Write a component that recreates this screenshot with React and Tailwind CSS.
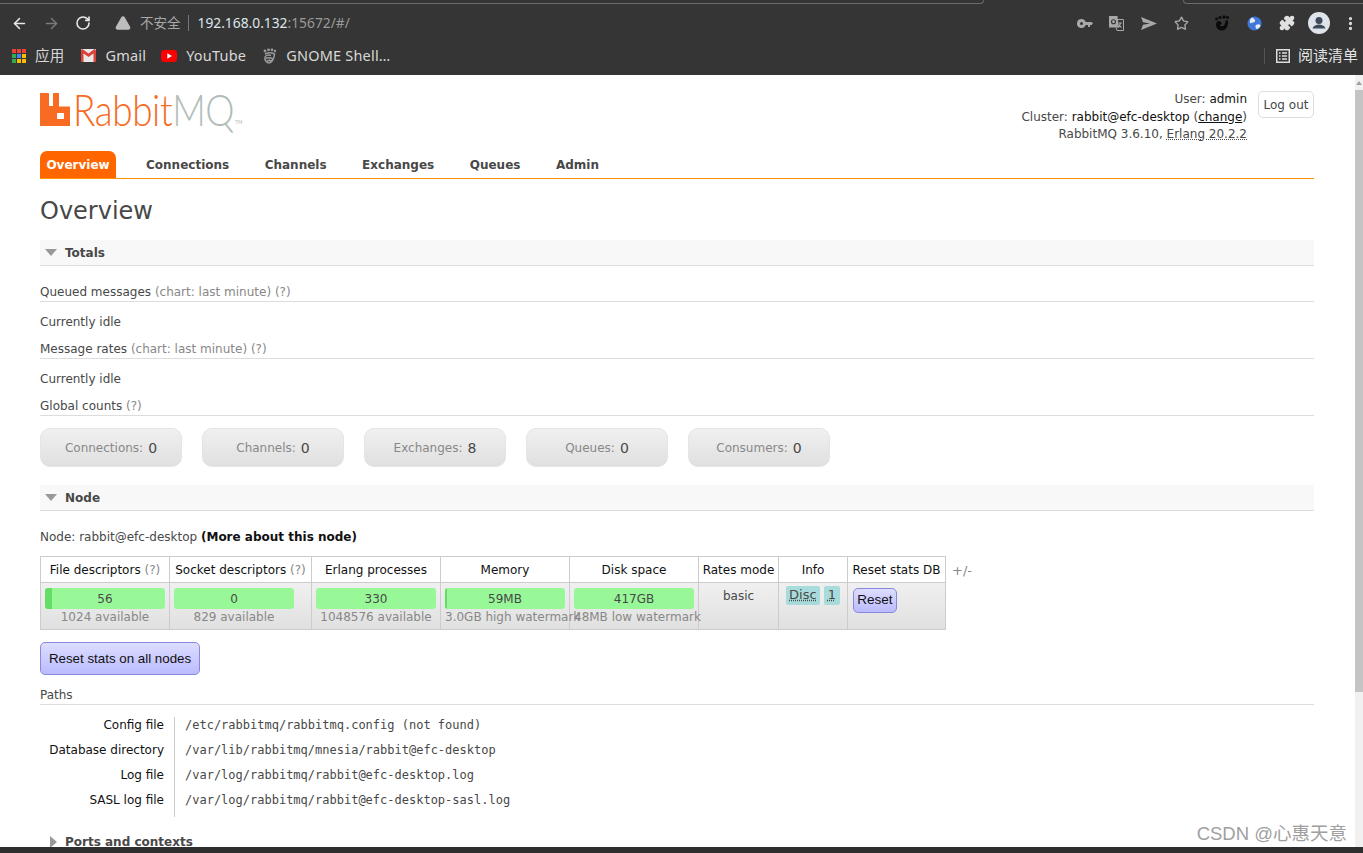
import React from 'react';
import { ArrowLeft, ArrowRight, RotateCw, TriangleAlert, Star, Puzzle, MoreVertical } from 'lucide-react';

const sans = { fontFamily: '"DejaVu Sans", Verdana, sans-serif' };
const lato = { fontFamily: 'Lato, sans-serif', fontWeight: 300 };
const arial = { fontFamily: '"Liberation Sans", sans-serif' };

const RabbitMark = () => (
  <svg width="30" height="33" viewBox="0 0 30 33" className="shrink-0">
    <path
      fillRule="evenodd"
      fill="#f76b23"
      d="M0 33V.6C0 .3.3 0 .6 0h7.800C8.700 0 9 .3 9 .6V13h4V.6c0-.3.3-.6.6-.6h4.800c.3 0 .6.3.6.6V13.500h11V33ZM17 20.500v5c0 .3.2.5.5.5h6c.3 0 .5-.2.5-.5v-5c0-.3-.2-.5-.5-.5h-6c-.3 0-.5.2-.5.5Z"
    />
  </svg>
);

const Bookmark = ({ icon, label, className }) => (
  <div className={`flex items-center gap-[9px] ${className}`}>
    {icon}
    <span>{label}</span>
  </div>
);

const AppsIcon = () => {
  const colors = ['#ea4335', '#ea4335', '#ea4335', '#34a853', '#4285f4', '#fbbc05', '#34a853', '#fbbc05', '#fbbc05'];
  return (
    <div className="grid grid-cols-3 gap-[1px] w-[14px] h-[14px]">
      {colors.map((c, i) => (
        <svg key={i} width="4" height="4" className="block">
          <rect width="4" height="4" fill={c} />
        </svg>
      ))}
    </div>
  );
};

const BrowserBar = () => (
  <div className="h-[75px] shrink-0 bg-[#353535] flex flex-col text-[#d8d8d8]" style={{ fontFamily: '"Noto Sans", "Noto Sans CJK SC", sans-serif' }}>
    <div className="h-[4px] shrink-0 flex justify-between">
      <div className="w-[984px] border-b border-r border-[#6a6a6a] rounded-br-[6px]"></div>
      <div className="w-[180px] border-b border-l border-[#6a6a6a] rounded-bl-[6px]"></div>
    </div>
    <div className="h-[38px] flex items-center pl-[11px] pr-[4px]">
      <ArrowLeft size={17} className="text-[#e8e8e8] mr-[15px]" strokeWidth={2.2} />
      <ArrowRight size={17} className="text-[#7a7a7a] mr-[15px]" strokeWidth={2.2} />
      <RotateCw size={16} className="text-[#e8e8e8] mr-[24px]" strokeWidth={2.4} />
      <TriangleAlert size={16} fill="#bdbdbd" className="text-[#bdbdbd] mr-[9px]" />
      <span className="text-[13.500px] text-[#a8a8a8]">不安全</span>
      <div className="w-px h-[16px] bg-[#777] ml-[7px] mr-[9px]"></div>
      <span className="text-[13.800px] text-[#dfe7ee]">192.168.0.132<span className="text-[#9a9a9a]">:15672/#/</span></span>
      <div className="ml-auto flex items-center">
        <svg width="16" height="9" viewBox="0 0 16 9" className="mr-[16px]">
          <path fill="#a8a8a8" fillRule="evenodd" d="M4.500 0a4.500 4.500 0 1 0 4.200 6H11v2h2V6h1.500L16 4.500 14.500 3H8.700A4.500 4.500 0 0 0 4.500 0Zm0 3a1.500 1.500 0 1 1 0 3 1.500 1.500 0 0 1 0-3Z" />
        </svg>
        <svg width="15" height="15" viewBox="0 0 15 15" className="mr-[17px]">
          <path fill="none" stroke="#a8a8a8" d="M6 3.500h8.500v11H8L7 11.500" />
          <path fill="#a8a8a8" d="M0 0h8.500l1 11.500H0Z" />
          <circle cx="4.500" cy="5.800" r="2" fill="none" stroke="#353535" strokeWidth="1.100" />
          <path stroke="#a8a8a8" strokeWidth="1.100" fill="none" d="M9 7h4M11.500 6.500c0 2-1.200 4-2.500 5M9.500 8.500c.8 1.200 1.800 2.200 3 3" />
        </svg>
        <svg width="16" height="13" viewBox="0 0 16 13" className="mr-[17px]">
          <path fill="#a8a8a8" d="M0 0 16 6.500 0 13l2-5.200 7-1.300-7-1.300Z" />
        </svg>
        <Star size={15} className="text-[#a8a8a8] mr-[25px]" strokeWidth={2.2} />
        <svg width="16" height="16" viewBox="0 0 16 16" className="mr-[17px]">
          <path fill="#0a0a0a" d="M8 15.500c-3.500 0-6-2.500-6-5.500C2 6.500 5 5 7 7c1.500 1.500 0 3.500-1.500 2.500 .5 2 3 2.500 4.500 1 1.500-1.500 1-4 2-5 1-1 2.500 0 2 2.500C13.500 12 11.500 15.500 8 15.500Z" />
          <circle cx="2.500" cy="4" r="1.400" fill="#0a0a0a" />
          <circle cx="6" cy="2.500" r="1.500" fill="#0a0a0a" />
          <circle cx="10" cy="2" r="1.700" fill="#0a0a0a" />
          <circle cx="13.500" cy="2.500" r="1.400" fill="#0a0a0a" />
        </svg>
        <svg width="15" height="15" viewBox="0 0 15 15" className="mr-[17px]">
          <circle cx="7.500" cy="7.500" r="7" fill="#3f78d8" />
          <path fill="#e8eef8" d="M5 1.500c2 1 3.500 2 3 4-1 1.500-3 .5-4.500 2C2.500 6 2.500 3 5 1.500ZM9 9c2-1 3.500-1 4.500.5-.5 2-2.500 3.500-4 3.500C8.500 11.500 8 10 9 9Z" />
        </svg>
        <Puzzle size={16} fill="#e0e0e0" className="text-[#e0e0e0] mr-[13px]" />
        <svg width="22" height="22" viewBox="0 0 22 22" className="mr-[12px]">
          <circle cx="11" cy="11" r="11" fill="#dfe3ea" />
          <circle cx="11" cy="8.500" r="3.500" fill="#3d4a5c" />
          <path fill="#3d4a5c" d="M4.500 16.500c1-3 4-4 6.500-4s5.500 1 6.500 4Z" />
        </svg>
        <MoreVertical size={17} className="text-[#e0e0e0]" strokeWidth={2.6} />
      </div>
    </div>
    <div className="flex items-center h-[27px] pl-[12px] pr-[5px] text-[14.500px] tracking-[0.2px]">
      <Bookmark className="mr-[17px]" icon={<AppsIcon />} label="应用" />
      <Bookmark className="mr-[15px]" label="Gmail" icon={
        <svg width="15" height="13" viewBox="0 0 15 13">
          <rect width="15" height="13" rx="1" fill="#e9e9e9" />
          <path d="M0 1.500V13h2.500V4.500L7.500 8 12.500 4.500V13H15V1.500L13.500 0 7.500 4.500 1.500 0Z" fill="#d9443a" />
        </svg>
      } />
      <Bookmark className="mr-[16px]" label="YouTube" icon={
        <svg width="16" height="12" viewBox="0 0 16 12">
          <rect width="16" height="12" rx="3" fill="#f00" />
          <path d="M6.300 3.300 11 6 6.300 8.700Z" fill="#fff" />
        </svg>
      } />
      <Bookmark label="GNOME Shell…" icon={
        <svg width="15" height="16" viewBox="0 0 15 16">
          <path fill="none" stroke="#9a9a9a" strokeWidth="1.500" d="M7.500 15C4 15 2.500 12 3 9c1-2 4-2.500 6-1.500M4 10.500c2-1 5-.5 7 .5M5 13c2-1 4-.5 5 0M3 6c3-1.500 7-1.500 9.500 0-.5 3-.5 7-5 9" />
          <circle cx="3" cy="3" r="1.400" fill="#9a9a9a" />
          <circle cx="6.500" cy="1.800" r="1.400" fill="#9a9a9a" />
          <circle cx="10" cy="1.800" r="1.400" fill="#9a9a9a" />
          <circle cx="13" cy="3" r="1.200" fill="#9a9a9a" />
        </svg>
      } />
      <div className="ml-auto flex items-center">
        <div className="w-px h-[16px] bg-[#555] mr-[11px]"></div>
        <svg width="14" height="14" viewBox="0 0 14 14" className="mr-[8px]">
          <rect x=".75" y=".75" width="12.500" height="12.500" fill="none" stroke="#ddd" strokeWidth="1.500" />
          <path stroke="#ddd" strokeWidth="1.300" d="M3 4h1.500M6 4h5M3 7h1.500M6 7h5M3 10h1.500M6 10h5" />
        </svg>
        <span className="text-[15px] tracking-normal text-[#e4e4e4]">阅读清单</span>
      </div>
    </div>
  </div>
);

const Section = ({ title, className = '' }) => (
  <div className={`h-[26px] bg-[#f8f8f8] border-b border-[#dddddd] flex items-center pl-[5px] font-bold text-[#484848] text-[12px] ${className}`}>
    <svg width="12" height="7" viewBox="0 0 12 7" className="mr-[8px]">
      <path d="M0 0h12L6 7Z" fill="#999" />
    </svg>
    {title}
  </div>
);

const SubHead = ({ title, hint }) => (
  <div className="h-[18px] pt-[1px] border-b border-[#dddddd] text-[12px] text-[#484848] leading-[14px] whitespace-nowrap">
    {title} {hint && <span className="text-[#888]">{hint}</span>} <span className="text-[#888]">(?)</span>
  </div>
);

const Stat = ({ label, value }) => (
  <div className="w-[142px] h-[39px] pt-[1px] rounded-[10px] bg-gradient-to-b from-[#f0f0f0] to-[#e0e0e0] border border-[#e4e4e4] flex items-center justify-center gap-[5px] text-[12px]">
    <span className="text-[#888]">{label}:</span>
    <span className="text-[#484848] text-[14px]">{value}</span>
  </div>
);

const Bar = ({ value, note, fill }) => (
  <div className="w-[120px] ml-[4px] text-center">
    <div className="relative h-[21px] rounded-[3px] bg-[#98f898] flex items-center justify-center text-[#484848] text-[12px] overflow-hidden">
      {fill && <div className={`absolute left-0 top-0 bottom-0 ${fill} bg-[#66dd66]`}></div>}
      <span className="relative">{value}</span>
    </div>
    <div className="text-[#888] text-[12px] leading-[14px] mt-[1px] whitespace-nowrap">{note}</div>
  </div>
);

const headCell = 'border border-[#cccccc] bg-white h-[26px] text-center font-normal text-[12px] text-[#111] p-0 whitespace-nowrap';
const bodyCell = 'border border-[#cccccc] align-top pt-[5px] px-0 pb-0 text-center';

const NodeTable = () => (
  <div className="flex items-start">
    <table className="border-collapse table-fixed w-[905px] h-[74px]">
      <colgroup>
        <col className="w-[129px]" />
        <col className="w-[142px]" />
        <col className="w-[129px]" />
        <col className="w-[129px]" />
        <col className="w-[129px]" />
        <col className="w-[80px]" />
        <col className="w-[69px]" />
        <col className="w-[98px]" />
      </colgroup>
      <thead>
        <tr>
          <th className={headCell}>File descriptors <span className="text-[#888]">(?)</span></th>
          <th className={headCell}>Socket descriptors <span className="text-[#888]">(?)</span></th>
          <th className={headCell}>Erlang processes</th>
          <th className={headCell}>Memory</th>
          <th className={headCell}>Disk space</th>
          <th className={headCell}>Rates mode</th>
          <th className={headCell}>Info</th>
          <th className={headCell}>Reset stats DB</th>
        </tr>
      </thead>
      <tbody>
        <tr className="bg-gradient-to-b from-[#f0f0f0] to-[#e0e0e0] h-[47px]">
          <td className={bodyCell}><Bar value="56" note="1024 available" fill="w-[7px]" /></td>
          <td className={bodyCell}><Bar value="0" note="829 available" /></td>
          <td className={bodyCell}><Bar value="330" note="1048576 available" /></td>
          <td className={bodyCell}><Bar value="59MB" note="3.0GB high watermark" fill="w-[2px]" /></td>
          <td className={bodyCell}><Bar value="417GB" note="48MB low watermark" /></td>
          <td className="border border-[#cccccc] align-top pt-[4px] px-0 pb-0 text-center text-[12px] text-[#484848]">basic</td>
          <td className="border border-[#cccccc] align-top pt-[3px] px-0 pb-0 text-center">
            <div className="flex justify-center gap-[4px]">
              <span className="bg-[#a8dcdc] rounded-[2px] h-[19px] px-[3px] text-[13px] leading-[18px] text-[#484848] underline decoration-dotted">Disc</span>
              <span className="bg-[#a8dcdc] rounded-[2px] h-[19px] px-[4px] text-[13px] leading-[18px] text-[#484848] underline decoration-dotted">1</span>
            </div>
          </td>
          <td className="border border-[#cccccc] align-top pt-[5px] pl-[5px] pr-0 pb-0">
            <button className="block h-[25px] w-[44px] rounded-[5px] border border-[#8888dd] bg-gradient-to-b from-[#ddddff] to-[#bbbbff] text-[13.500px] text-[#111]" style={arial}>Reset</button>
          </td>
        </tr>
      </tbody>
    </table>
    <span className="ml-[6px] mt-[5px] text-[13px] text-[#888]">+/-</span>
  </div>
);

const PathRow = ({ label, path }) => (
  <div className="flex h-[25px] items-start">
    <div className="w-[124px] pt-[1px] text-right text-[12px] leading-[15px] text-[#111] whitespace-nowrap">{label}</div>
    <div className="w-px h-[25px] bg-[#cccccc] ml-[10px]"></div>
    <div className="ml-[10px] pt-[1px] text-[12px] leading-[15px] text-[#484848] whitespace-nowrap" style={{ fontFamily: '"DejaVu Sans Mono", monospace' }}>{path}</div>
  </div>
);

const tabs = ['Connections', 'Channels', 'Exchanges', 'Queues', 'Admin'];

const Page = () => (
  <div className="flex-1 min-h-0 flex overflow-hidden bg-white" style={sans}>
    <div className="flex-1 min-w-0 pl-[40px] pr-[41px]">
      {/* header */}
      <div className="h-[76px] flex justify-between items-start pt-[16px]">
        <div className="flex items-start mt-[2px]">
          <RabbitMark />
          <div className="w-[159px] ml-[3px] h-[33px] overflow-visible">
            <div className="origin-left scale-x-[.84] whitespace-nowrap text-[44px] leading-[33px] tracking-[-0.5px]" style={lato}>
              <span className="text-[#f76b23]">Rabbit</span>
              <span className="text-[#b1bdb8]">MQ</span>
            </div>
          </div>
          <span className="text-[5px] leading-[5px] text-[#b1bdb8] mt-[27px] ml-[3px]">TM</span>
        </div>
        <div className="flex items-start">
          <div className="text-right text-[12px] leading-[17.500px] text-[#484848] whitespace-nowrap">
            <div>User: <span className="text-[#111]">admin</span></div>
            <div>Cluster: <span className="text-[#111]">rabbit@efc-desktop</span> (<span className="text-[#111] underline">change</span>)</div>
            <div>RabbitMQ 3.6.10, <span className="underline decoration-dotted">Erlang 20.2.2</span></div>
          </div>
          <button className="ml-[11px] w-[56px] h-[27px] rounded-[5px] border border-[#dddddd] text-[12px] text-[#484848] bg-white">Log out</button>
        </div>
      </div>

      {/* nav */}
      <div className="flex items-end font-bold text-[12px] text-[#484848]">
        <div className="h-[27px] w-[76px] bg-[#ff6600] text-white rounded-t-[7px] flex items-center justify-center mr-[30px]">Overview</div>
        {tabs.map((t) => (
          <div key={t} className="h-[27px] flex items-center mr-[35.500px]">{t}</div>
        ))}
      </div>
      <div className="h-px bg-[#ff9000]"></div>

      <h1 className="text-[24px] leading-[30px] text-[#484848] font-normal mt-[17px]">Overview</h1>

      <Section title="Totals" className="mt-[14px]" />
      <div className="mt-[18px]"><SubHead title="Queued messages" hint="(chart: last minute)" /></div>
      <div className="mt-[13px] text-[12px] leading-[15px] text-[#484848]">Currently idle</div>
      <div className="mt-[11px]"><SubHead title="Message rates" hint="(chart: last minute)" /></div>
      <div className="mt-[13px] text-[12px] leading-[15px] text-[#484848]">Currently idle</div>
      <div className="mt-[11px]"><SubHead title="Global counts" /></div>

      <div className="flex gap-[20px] mt-[12px]">
        <Stat label="Connections" value="0" />
        <Stat label="Channels" value="0" />
        <Stat label="Exchanges" value="8" />
        <Stat label="Queues" value="0" />
        <Stat label="Consumers" value="0" />
      </div>

      <Section title="Node" className="mt-[18px]" />
      <div className="mt-[18px] text-[12px] leading-[16px] text-[#484848]">
        Node: rabbit@efc-desktop <span className="font-bold text-[#111]">(More about this node)</span>
      </div>
      <div className="mt-[11px]"><NodeTable /></div>

      <button className="block mt-[12px] w-[160px] h-[33px] rounded-[5px] border border-[#8888dd] bg-gradient-to-b from-[#ddddff] to-[#bbbbff] text-[13.330px] text-[#111]" style={arial}>Reset stats on all nodes</button>

      <div className="mt-[12px] h-[18px] pt-[1px] border-b border-[#dddddd] text-[12px] leading-[14px] text-[#484848]">Paths</div>
      <div className="mt-[12px]">
        <PathRow label="Config file" path="/etc/rabbitmq/rabbitmq.config (not found)" />
        <PathRow label="Database directory" path="/var/lib/rabbitmq/mnesia/rabbit@efc-desktop" />
        <PathRow label="Log file" path="/var/log/rabbitmq/rabbit@efc-desktop.log" />
        <PathRow label="SASL log file" path="/var/log/rabbitmq/rabbit@efc-desktop-sasl.log" />
      </div>
      <div className="mt-[17px] flex items-center pl-[10px] font-bold text-[12px] text-[#484848] leading-[16px]">
        <svg width="7" height="12" viewBox="0 0 7 12" className="mr-[8px]">
          <path d="M0 0v12l7-6Z" fill="#999" />
        </svg>
        Ports and contexts
      </div>
    </div>
    {/* scrollbar */}
    <div className="w-[8px] shrink-0 bg-[#f1f1f1] flex flex-col">
      <div className="h-[15px] flex justify-center pt-[6px]">
        <svg width="6" height="4" viewBox="0 0 6 4">
          <path d="M0 4 3 0l3 4Z" fill="#a0a0a0" />
        </svg>
      </div>
      <div className="h-[602px] bg-[#c4c4c4]"></div>
    </div>
  </div>
);

export default function App() {
  return (
    <div className="relative w-[1363px] h-[853px] flex flex-col overflow-hidden">
      <BrowserBar />
      <Page />
      <div className="h-[6px] shrink-0 bg-[#2e2e2e]"></div>
      <div className="absolute right-[16px] bottom-[7px] text-[18.500px] leading-[24px] text-[#a0a0a0]" style={{ fontFamily: '"Liberation Sans", "Noto Sans CJK SC", sans-serif' }}>CSDN @心惠天意</div>
    </div>
  );
}
